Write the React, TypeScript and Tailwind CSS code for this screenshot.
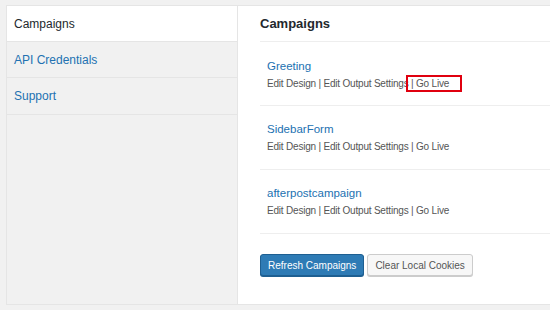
import React from "react";

const items = ["Greeting", "SidebarForm", "afterpostcampaign"];

export default function App() {
  return (
    <div
      className="w-[550px] h-[310px] overflow-hidden bg-[#f1f1f1] pt-[5px] pl-[6px]"
      style={{ fontFamily: '"Liberation Sans", Arial, sans-serif' }}
    >
      <div className="flex w-[570px] h-[300px] border border-[#e5e5e5] bg-white">
        <div className="w-[231px] shrink-0 bg-[#f1f1f1] border-r border-[#e5e5e5] flex flex-col">
          <div className="h-[36px] flex items-center pl-[7px] bg-white border-b border-[#e5e5e5] text-[12px] text-[#23282d]">
            Campaigns
          </div>
          <div className="h-[36px] flex items-center pl-[7px] border-b border-[#e5e5e5] text-[12px] text-[#2271b1]">
            API Credentials
          </div>
          <div className="h-[37px] flex items-center pl-[7px] border-b border-[#e5e5e5] text-[12px] text-[#2271b1]">
            Support
          </div>
        </div>
        <div className="flex-1 pl-[22px]">
          <div className="h-[36px] flex items-center border-b border-[#eeeeee] text-[13px] font-bold text-[#23282d]">
            Campaigns
          </div>
          {items.map((name, i) => (
            <div
              key={name}
              className={
                i === 0
                  ? "pl-[7px] pt-[16px] pb-[14px] border-b border-[#eeeeee]"
                  : "pl-[7px] pt-[15px] pb-[15px] border-b border-[#eeeeee]"
              }
            >
              <div className="h-[16px] leading-[16px] text-[11.5px] text-[#2271b1]">{name}</div>
              <div className="mt-[3px] h-[14px] leading-[14px] text-[10px] tracking-[-0.2px] text-[#555555] whitespace-nowrap">
                Edit Design | Edit Output Settings{" "}
                {i === 0 ? (
                  <span className="relative">
                    | Go Live
                    <span className="absolute -left-[5px] -right-[13px] -top-[3px] -bottom-[3px] border-2 border-[#e0000f]" />
                  </span>
                ) : (
                  "| Go Live"
                )}
              </div>
            </div>
          ))}
          <div className="flex gap-[3px] mt-[20px]">
            <button className="h-[22px] px-[7px] rounded-[3px] border border-[#1e5f91] bg-[#2e7bb5] text-white text-[10px] shadow-[0_1px_0_#1e5f91]">
              Refresh Campaigns
            </button>
            <button className="h-[22px] px-[7px] rounded-[3px] border border-[#cccccc] bg-[#f7f7f7] text-[#555555] text-[10px] shadow-[0_1px_0_#cccccc]">
              Clear Local Cookies
            </button>
          </div>
        </div>
      </div>
    </div>
  );
}
